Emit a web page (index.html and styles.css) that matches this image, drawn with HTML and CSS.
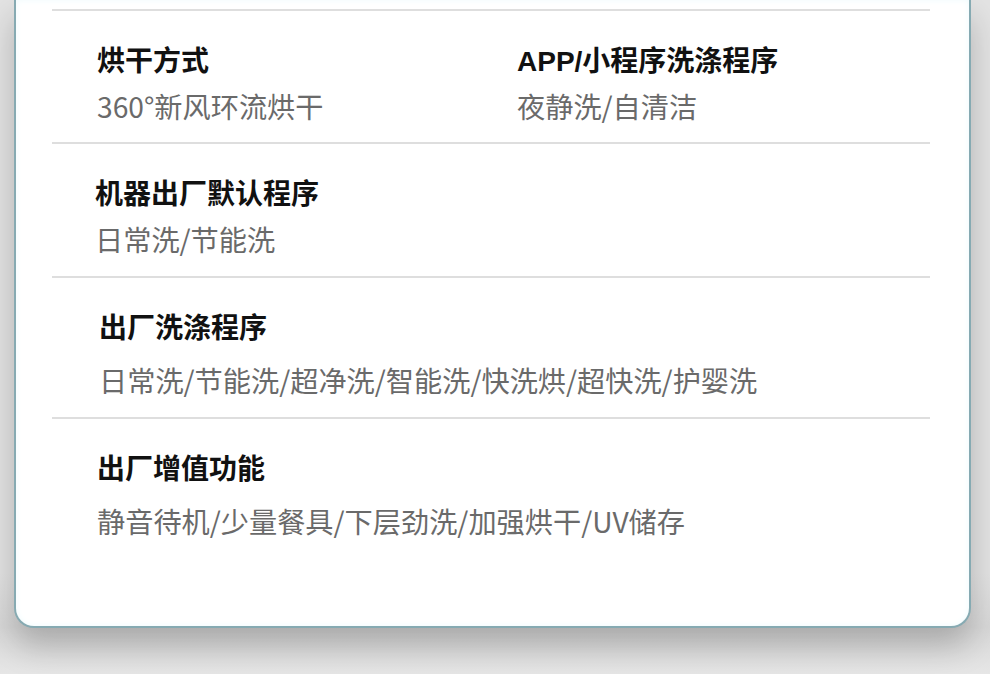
FILE: index.html
```html
<!DOCTYPE html>
<html lang="zh-CN">
<head>
    <meta charset="UTF-8">
    <meta name="viewport" content="width=device-width, initial-scale=1.0">
    <title>产品参数</title>
    <link rel="stylesheet" href="styles.css">
</head>
<body>
    <div class="card">
        <div class="row two-col">
            <div class="item">
                <div class="label">烘干方式</div>
                <div class="value">360°新风环流烘干</div>
            </div>
            <div class="item">
                <div class="label">APP/小程序洗涤程序</div>
                <div class="value">夜静洗/自清洁</div>
            </div>
        </div>
        <div class="row roomy">
            <div class="item shift-left">
                <div class="label">机器出厂默认程序</div>
                <div class="value">日常洗/节能洗</div>
            </div>
        </div>
        <div class="row loose roomy">
            <div class="item shift-right">
                <div class="label">出厂洗涤程序</div>
                <div class="value">日常洗/节能洗/超净洗/智能洗/快洗烘/超快洗/护婴洗</div>
            </div>
        </div>
        <div class="row loose">
            <div class="item">
                <div class="label">出厂增值功能</div>
                <div class="value">静音待机/少量餐具/下层劲洗/加强烘干/UV储存</div>
            </div>
        </div>
    </div>
</body>
</html>
```

FILE: styles.css
```css
/* Page background */
body {
  margin: 0;
  height: 674px;
  overflow: hidden;
  background: linear-gradient(to bottom, #e3e3e3 0%, #e3e3e3 85%, #d8d8d8 93%, #e6e6e6 100%);
  font-family: "Liberation Sans", "Noto Sans CJK SC", sans-serif;
}

/* White spec card, its top is cut off */
.card {
  box-sizing: border-box;
  width: 957px;
  margin-left: 14px;
  padding: 9px 39px 69px 36px;
  background: #fff;
  border: 2px solid #86aab2;
  border-top: none;
  border-radius: 0 0 20px 20px;
  box-shadow: inset 0 0 6px #eefbfd, 0 18px 32px rgba(0, 0, 0, 0.22);
}

/* One block of specs */
.row {
  border-top: 2px solid #dedede;
  padding: 34px 0 19px 45px;
}

.roomy {
  padding-bottom: 20px;
}

.two-col {
  display: grid;
  grid-template-columns: 420px 1fr;
}

.label {
  font-size: 28px;
  line-height: 34px;
  font-weight: bold;
  color: #111;
}

.value {
  margin-top: 10px;
  font-family: "Noto Sans CJK SC", sans-serif;
  font-size: 28.2px;
  line-height: 34px;
  color: #6a6a6a;
}

.loose .value {
  margin-top: 17px;
}

.shift-left {
  margin-left: -2px;
}

.shift-right {
  margin-left: 2px;
}
```
